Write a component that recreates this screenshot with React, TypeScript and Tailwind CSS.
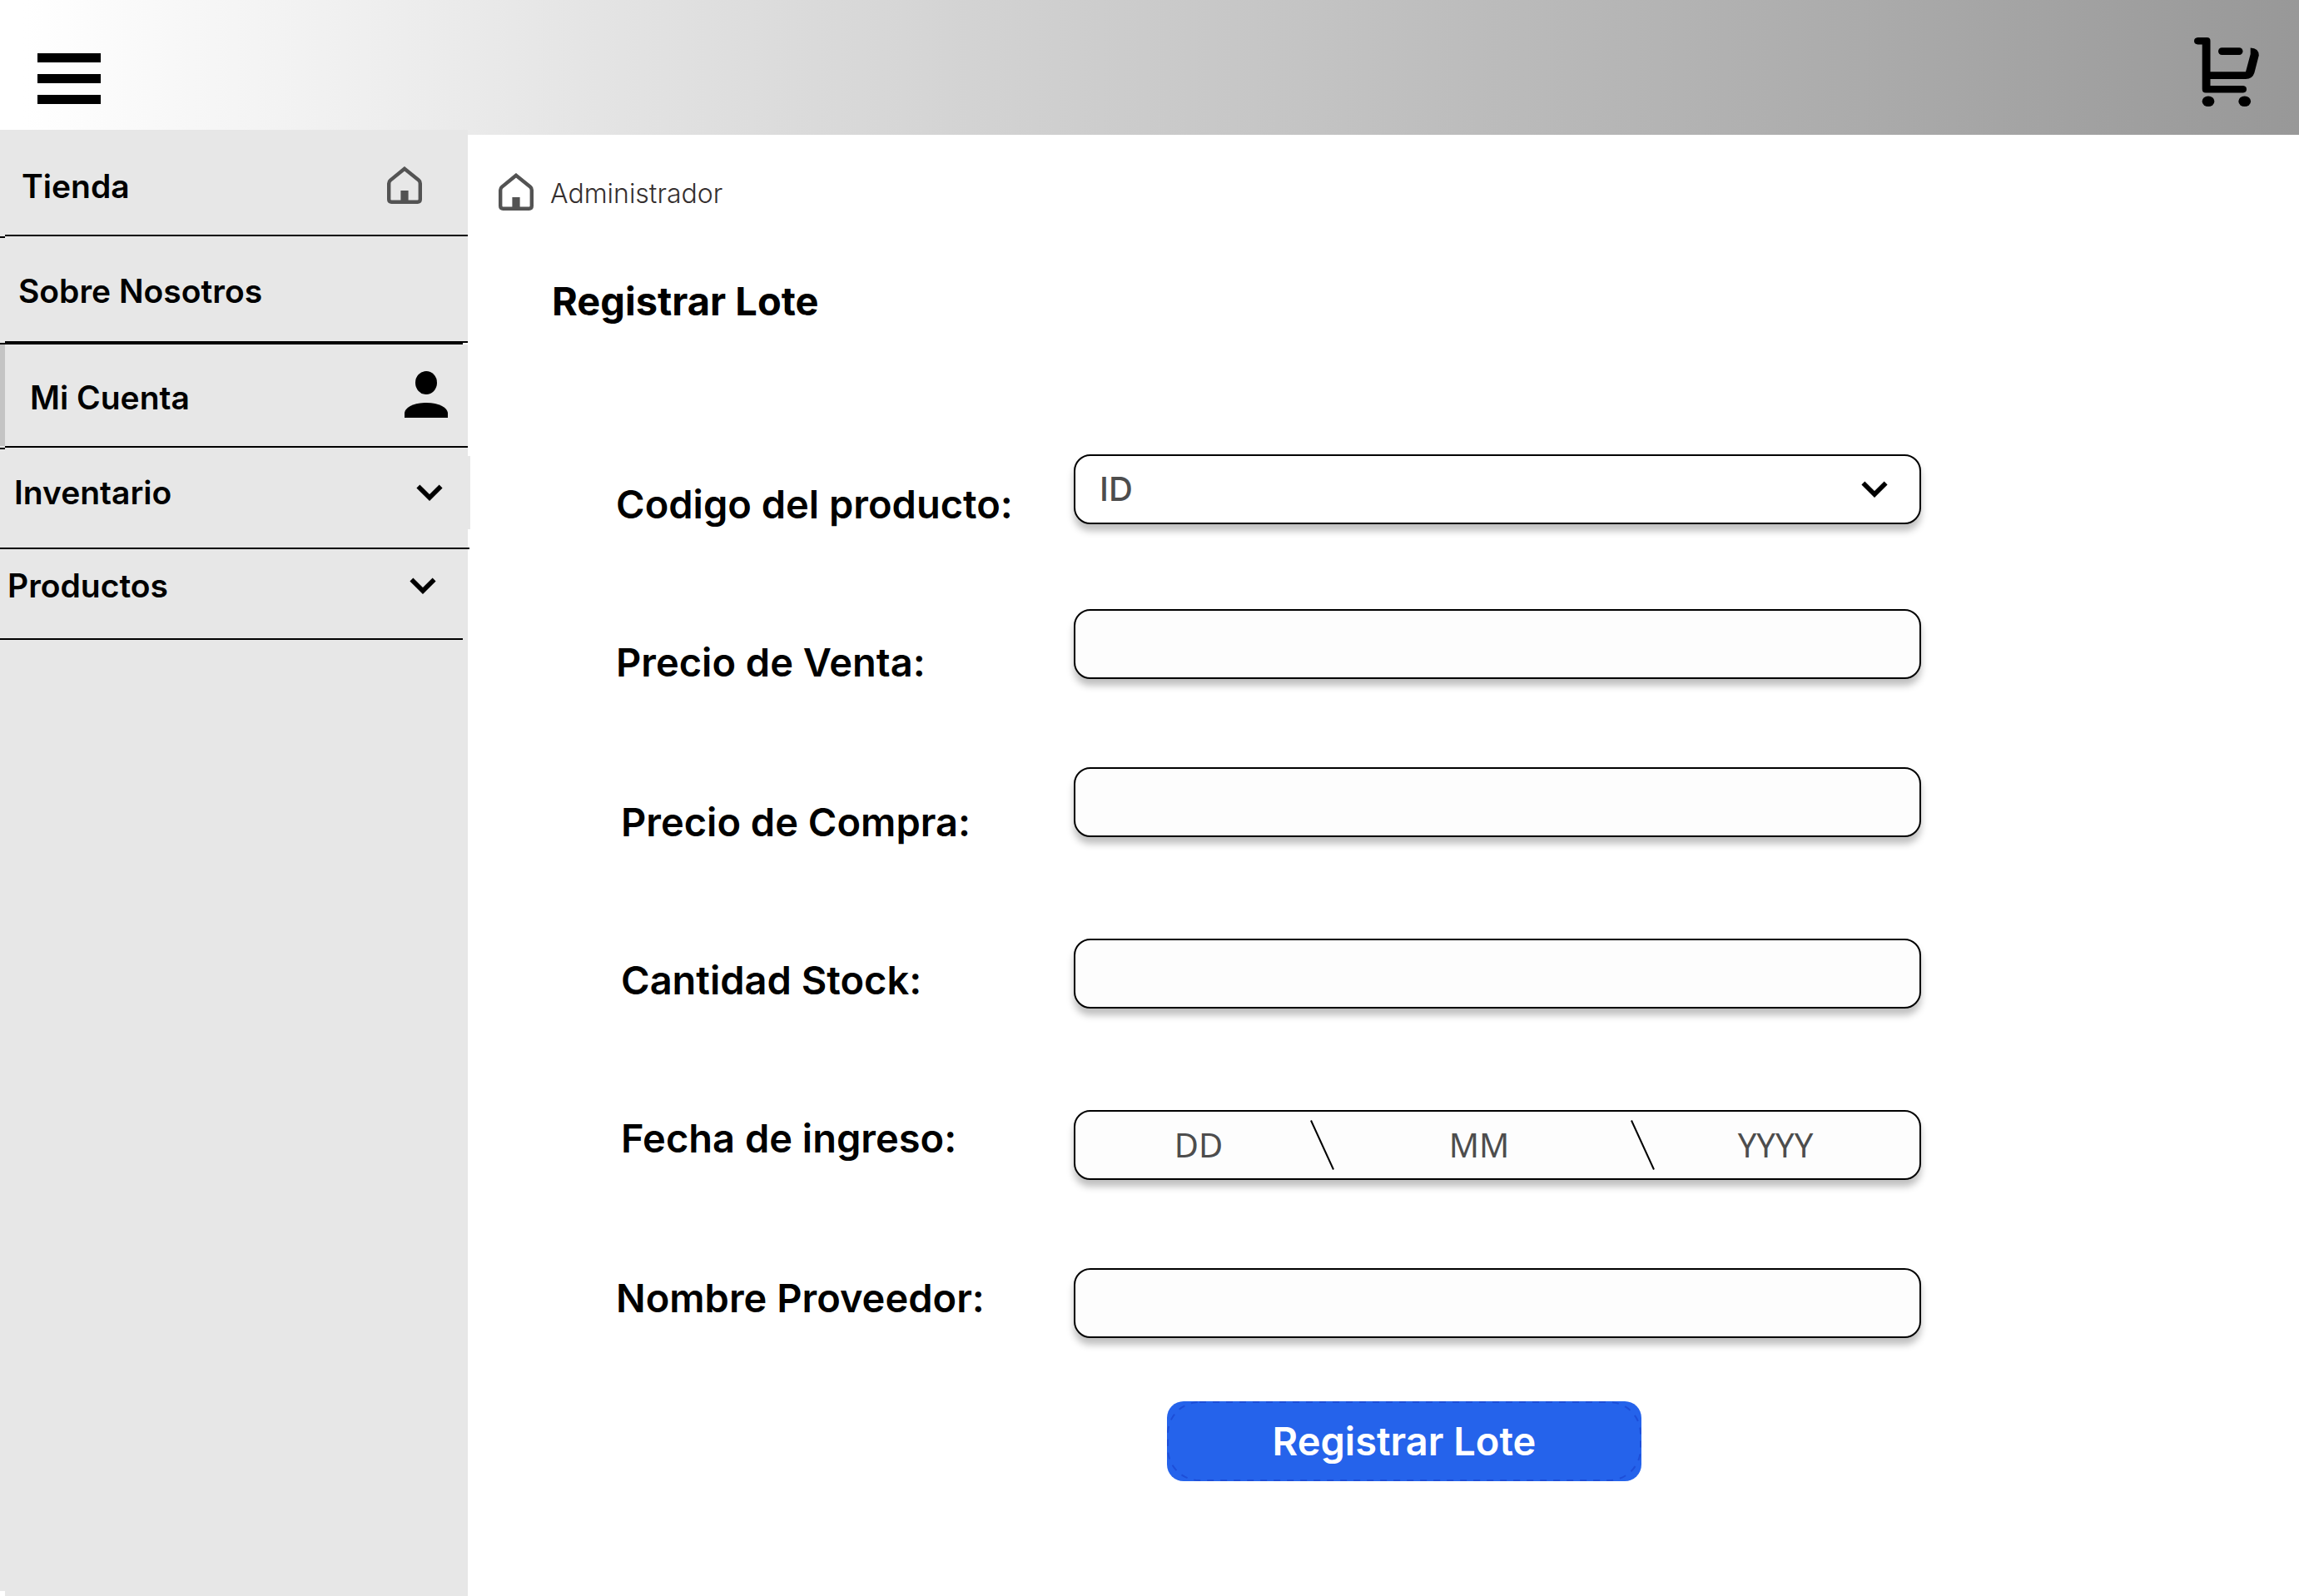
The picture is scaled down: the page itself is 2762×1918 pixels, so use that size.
import type { ReactNode } from "react";

const field =
  "h-[84px] w-full rounded-[20px] border-2 border-black text-[40px] text-[#4d4d4d] shadow-[0_8px_8px_rgba(0,0,0,0.25)]";

function HomeIcon({ className = "" }: { className?: string }) {
  return (
    <svg className={`h-[45px] w-[42px] shrink-0 ${className}`} viewBox="0 0 42 45" fill="none" aria-hidden="true">
      <path
        d="M21 2.8 L4 16.6 Q2.2 18 2.2 20.5 V39.6 Q2.2 42.8 5.4 42.8 H36.6 Q39.8 42.8 39.8 39.6 V20.5 Q39.8 18 38 16.6 Z"
        stroke="#535353"
        strokeWidth="4.4"
      />
      <rect x="16.4" y="29" width="9.2" height="14" fill="#535353" />
    </svg>
  );
}

function PersonIcon() {
  return (
    <svg className="mb-2 h-14 w-[52px] shrink-0" viewBox="0 0 52 56" aria-hidden="true">
      <ellipse cx="26" cy="14" rx="13" ry="14" />
      <path d="M0 56 V50 C1 44 10 38 26 38 S51 44 52 50 V56 Z" />
    </svg>
  );
}

function Chevron() {
  return (
    <svg className="h-5 w-8 shrink-0" viewBox="0 0 32 20" fill="none" aria-hidden="true">
      <path d="M2.4 2.4 L16 16 L29.6 2.4" stroke="black" strokeWidth="5.6" />
    </svg>
  );
}

function CartIcon() {
  return (
    <svg className="h-[83px] w-[78px]" viewBox="0 0 78 83" aria-hidden="true">
      <path d="M4.5 0 H15.5 Q19.5 0 19.5 4 V41.3 H62 L67.7 20 V12.4 Q78 13 77.8 21.5 L72.4 42.5 Q70 50 62 50 H19.5 V58 H59 Q63 58.5 63 62.3 Q63 66.2 59 66.5 H14 Q9.7 66.5 9.7 62 V8.4 H4.5 Q0 8 0 4.2 Q0 0.4 4.5 0 Z" />
      <rect x="29" y="12.3" width="29.5" height="8.6" rx="4.3" />
      <ellipse cx="17" cy="76.7" rx="7.4" ry="6.3" />
      <ellipse cx="60.7" cy="76.7" rx="7.4" ry="6.3" />
    </svg>
  );
}

function Slash() {
  return (
    <svg className="h-[60px] w-[29px] shrink-0" viewBox="0 0 29 60" aria-hidden="true">
      <path d="M1 0.5 L28 59.5" stroke="black" strokeWidth="2" />
    </svg>
  );
}

function StepDivider() {
  return (
    <div className="h-1">
      <div className="ml-1.5 h-0.5 bg-black" />
      <div className="h-0.5 w-1.5 bg-black" />
    </div>
  );
}

function Row({ id, label, offset, children }: { id: string; label: string; offset: string; children: ReactNode }) {
  return (
    <div className="flex items-start">
      <label htmlFor={id} className={`w-[550px] shrink-0 text-[47px] leading-[60px] font-semibold ${offset}`}>
        {label}
      </label>
      <div className="relative max-w-[1018px] flex-1">{children}</div>
    </div>
  );
}

export default function App() {
  return (
    <div className="flex min-h-screen flex-col bg-white font-['Inter',sans-serif] text-black">
      <header className="flex h-[162px] items-start justify-between bg-linear-to-r from-white from-1% to-[#989898] pl-[45px] pr-12">
        <button type="button" aria-label="Menú" className="mt-16 flex w-[76px] flex-col gap-3.5">
          <span className="h-[11px] w-full bg-black" />
          <span className="h-[11px] w-full bg-black" />
          <span className="h-[11px] w-full bg-black" />
        </button>
        <button type="button" aria-label="Carrito" className="mt-[45px]">
          <CartIcon />
        </button>
      </header>

      <div className="flex flex-1">
        <nav className="relative -mt-1.5 w-[562px] shrink-0 bg-[#e7e7e7] text-[39px] leading-[48px] font-semibold">
          <a href="#tienda" className="flex h-[126px] items-center justify-between pt-2.5 pr-[55px] pl-[26px]">
            Tienda
            <HomeIcon className="mb-1" />
          </a>
          <StepDivider />
          <a href="#nosotros" className="flex h-[124px] items-center pt-1 pl-[22px]">
            Sobre Nosotros
          </a>
          <div className="h-1">
            <div className="ml-1.5 h-0.5 bg-black" />
            <div className="h-0.5 border-r-[6px] border-white bg-black" />
          </div>
          <a
            href="#cuenta"
            className="flex h-[122px] items-center justify-between border-l-[6px] border-[#c4c4c4] pt-1.5 pr-6 pl-[30px]"
          >
            Mi Cuenta
            <PersonIcon />
          </a>
          <StepDivider />
          <button
            type="button"
            className="flex h-[118px] w-full items-center justify-between pr-[30px] pb-3.5 pl-[17px]"
          >
            Inventario
            <Chevron />
          </button>
          <div className="-mr-0.5 h-0.5 bg-black" />
          <button
            type="button"
            className="flex h-[107px] w-full items-center justify-between pr-[38px] pb-5 pl-[9px]"
          >
            Productos
            <Chevron />
          </button>
          <div className="mr-1.5 h-0.5 bg-black" />
          <span className="absolute top-[392px] left-full h-[88px] w-[3px] bg-[#e7e7e7]" />
          <span className="absolute bottom-0 left-0 size-1.5 bg-white" />
        </nav>

        <main className="min-w-0 flex-1">
          <div className="flex items-center gap-5 pt-[46px] pl-[37px]">
            <HomeIcon />
            <a href="#administrador" className="pt-1 text-[32px] leading-[41px] font-light text-[#352f2f]">
              Administrador
            </a>
          </div>
          <h1 className="mt-[79px] pl-[101px] text-[47px] leading-[60px] font-bold">Registrar Lote</h1>

          <form className="mt-[154px] pr-10 pl-[178px]" onSubmit={(e) => e.preventDefault()}>
            <Row id="codigo" label="Codigo del producto:" offset="pt-[30px]">
              <select id="codigo" className={`${field} appearance-none bg-white pl-[29px] font-medium`}>
                <option>ID</option>
              </select>
              <span className="pointer-events-none absolute inset-y-0 right-10 flex items-center">
                <Chevron />
              </span>
            </Row>
            <div className="mt-24">
              <Row id="venta" label="Precio de Venta:" offset="pt-[34px]">
                <input id="venta" className={`${field} bg-[#fdfdfd] px-7`} />
              </Row>
            </div>
            <div className="mt-24">
              <Row id="compra" label="Precio de Compra:" offset="pt-9 pl-1.5">
                <input id="compra" className={`${field} bg-[#fdfdfd] px-7`} />
              </Row>
            </div>
            <div className="mt-[110px]">
              <Row id="stock" label="Cantidad Stock:" offset="pt-5 pl-1.5">
                <input id="stock" className={`${field} bg-[#fdfdfd] px-7`} />
              </Row>
            </div>
            <div className="mt-[122px]">
              <Row id="dia" label="Fecha de ingreso:" offset="pt-1 pl-1.5">
                <div className={`${field} flex items-center bg-[#fdfdfd] font-['Noto_Sans',sans-serif]`}>
                  <input
                    id="dia"
                    aria-label="Día"
                    placeholder="DD"
                    className="w-0 flex-[268] pl-3.5 text-center placeholder:text-[#4d4d4d]"
                  />
                  <Slash />
                  <input
                    aria-label="Mes"
                    placeholder="MM"
                    className="w-0 flex-[348] pr-2 text-center placeholder:text-[#4d4d4d]"
                  />
                  <Slash />
                  <input
                    aria-label="Año"
                    placeholder="YYYY"
                    className="w-0 flex-[290] pr-7 text-center placeholder:text-[#4d4d4d]"
                  />
                </div>
              </Row>
            </div>
            <div className="mt-[106px]">
              <Row id="proveedor" label="Nombre Proveedor:" offset="pt-1.5">
                <input id="proveedor" className={`${field} bg-[#fdfdfd] px-7`} />
              </Row>
            </div>
            <button
              type="submit"
              className="relative mt-[76px] ml-[662px] flex h-24 w-[570px] items-center justify-center overflow-hidden rounded-[20px] bg-[#2563eb] text-[47px] leading-[60px] font-semibold text-white"
            >
              <svg className="absolute inset-0 size-full" viewBox="0 0 570 96" fill="none" aria-hidden="true">
                <rect x="1" y="1" width="568" height="94" rx="38" stroke="#1d4ed8" strokeWidth="2" strokeDasharray="8 8" />
              </svg>
              <span className="relative">Registrar Lote</span>
            </button>
          </form>
        </main>
      </div>
    </div>
  );
}
